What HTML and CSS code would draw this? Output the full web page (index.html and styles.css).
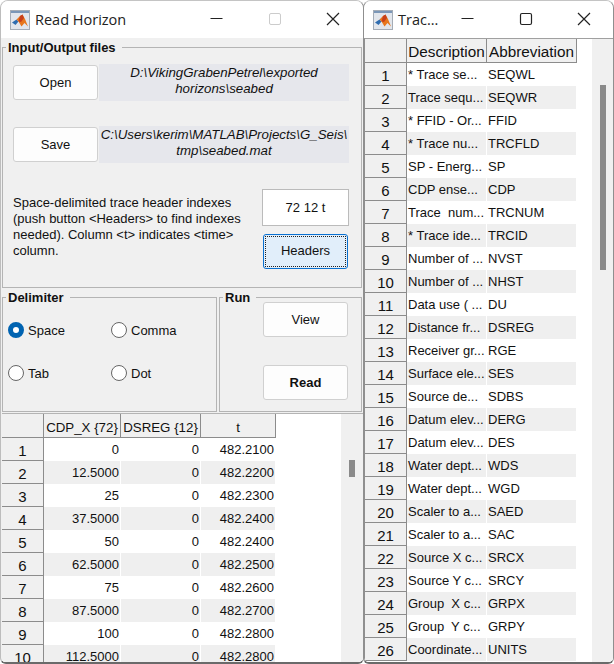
FILE: index.html
```html
<!DOCTYPE html>
<html lang="en">
<head>
    <meta charset="UTF-8">
    <title>Read Horizon</title>
    <link rel="stylesheet" href="styles.css">
</head>
<body>
    <div class="window win-read">
        <div class="titlebar">
            <svg class="app-icon" viewBox="0 0 20 20">
                <rect x="0.5" y="0.5" width="19" height="19" fill="#e2e6ec" stroke="#a4acb6"/>
                <rect x="1" y="1" width="18" height="2" fill="#7b97b8"/>
                <path d="M2 12.5 L6.5 9.5 L8.5 11.5 L5.5 15 Z" fill="#2f6db0"/>
                <path d="M6.5 9.5 L10 6 L12.5 4.5 L15 9 L18 16.5 L14.5 13 L11.5 16.5 L8.5 11.5 Z" fill="#e8761c"/>
                <path d="M10 6 L12.5 4.5 L14 8 L11 12 L8.5 11.5 Z" fill="#c8401a"/>
            </svg>
            <span class="title">Read Horizon</span>
            <div class="win-controls">
                <svg class="ctl" viewBox="0 0 58 37"><path d="M22.5 17.5 H34.5" stroke="#222" fill="none"/></svg>
                <svg class="ctl" viewBox="0 0 58 37"><rect x="23.5" y="12.5" width="11" height="11" rx="1.5" stroke="#ccc" fill="none"/></svg>
                <svg class="ctl" viewBox="0 0 58 37"><path d="M23 12 L35 24 M35 12 L23 24" stroke="#222" fill="none" stroke-width="1.2"/></svg>
            </div>
        </div>
        <div class="panel-body">
            <fieldset class="group group-files">
                <legend>Input/Output files</legend>
                <div class="file-row">
                    <button class="btn btn-file">Open</button>
                    <div class="path">D:\VikingGrabenPetrel\exported<br>horizons\seabed</div>
                </div>
                <div class="file-row file-row-save">
                    <button class="btn btn-file">Save</button>
                    <div class="path">C:\Users\kerim\MATLAB\Projects\G_Seis\<br>tmp\seabed.mat</div>
                </div>
                <div class="index-row">
                    <p class="hint">Space-delimited trace header indexes<br>(push button &lt;Headers&gt; to find indexes<br>needed). Column &lt;t&gt; indicates &lt;time&gt;<br>column.</p>
                    <div class="index-side">
                        <div class="index-input">72 12 t</div>
                        <button class="btn btn-focus"><span>Headers</span></button>
                    </div>
                </div>
            </fieldset>
            <div class="bottom-groups">
                <fieldset class="group group-delim">
                    <legend>Delimiter</legend>
                    <div class="radios">
                        <div class="radio radio-on"><i></i>Space</div>
                        <div class="radio"><i></i>Comma</div>
                        <div class="radio"><i></i>Tab</div>
                        <div class="radio"><i></i>Dot</div>
                    </div>
                </fieldset>
                <fieldset class="group group-run">
                    <legend>Run</legend>
                    <div class="run-btns">
                        <button class="btn btn-run">View</button>
                        <button class="btn btn-run btn-bold">Read</button>
                    </div>
                </fieldset>
            </div>
            <div class="table-wrap table-read">
                <div class="sheet">
                    <div class="tr head"><div class="rh"></div><div class="th c1">CDP_X {72}</div><div class="th c2">DSREG {12}</div><div class="th c3">t</div></div>
                    <div class="tr"><div class="rh">1</div><div class="td c1">0</div><div class="td c2">0</div><div class="td c3">482.2100</div></div>
                    <div class="tr alt"><div class="rh">2</div><div class="td c1">12.5000</div><div class="td c2">0</div><div class="td c3">482.2200</div></div>
                    <div class="tr"><div class="rh">3</div><div class="td c1">25</div><div class="td c2">0</div><div class="td c3">482.2300</div></div>
                    <div class="tr alt"><div class="rh">4</div><div class="td c1">37.5000</div><div class="td c2">0</div><div class="td c3">482.2400</div></div>
                    <div class="tr"><div class="rh">5</div><div class="td c1">50</div><div class="td c2">0</div><div class="td c3">482.2400</div></div>
                    <div class="tr alt"><div class="rh">6</div><div class="td c1">62.5000</div><div class="td c2">0</div><div class="td c3">482.2500</div></div>
                    <div class="tr"><div class="rh">7</div><div class="td c1">75</div><div class="td c2">0</div><div class="td c3">482.2600</div></div>
                    <div class="tr alt"><div class="rh">8</div><div class="td c1">87.5000</div><div class="td c2">0</div><div class="td c3">482.2700</div></div>
                    <div class="tr"><div class="rh">9</div><div class="td c1">100</div><div class="td c2">0</div><div class="td c3">482.2800</div></div>
                    <div class="tr alt"><div class="rh">10</div><div class="td c1">112.5000</div><div class="td c2">0</div><div class="td c3">482.2800</div></div>
                </div>
                <div class="scroll scroll-read"><div class="thumb"></div></div>
            </div>
        </div>
    </div>

    <div class="window win-trace">
        <div class="titlebar">
            <svg class="app-icon" viewBox="0 0 20 20">
                <rect x="0.5" y="0.5" width="19" height="19" fill="#e2e6ec" stroke="#a4acb6"/>
                <rect x="1" y="1" width="18" height="2" fill="#7b97b8"/>
                <path d="M2 12.5 L6.5 9.5 L8.5 11.5 L5.5 15 Z" fill="#2f6db0"/>
                <path d="M6.5 9.5 L10 6 L12.5 4.5 L15 9 L18 16.5 L14.5 13 L11.5 16.5 L8.5 11.5 Z" fill="#e8761c"/>
                <path d="M10 6 L12.5 4.5 L14 8 L11 12 L8.5 11.5 Z" fill="#c8401a"/>
            </svg>
            <span class="title">Trac...</span>
            <div class="win-controls">
                <svg class="ctl" viewBox="0 0 58 37"><path d="M22.5 17.5 H34.5" stroke="#222" fill="none"/></svg>
                <svg class="ctl" viewBox="0 0 58 37"><rect x="23.5" y="12.5" width="11" height="11" rx="1.5" stroke="#222" fill="none" stroke-width="1.2"/></svg>
                <svg class="ctl" viewBox="0 0 58 37"><path d="M23 12 L35 24 M35 12 L23 24" stroke="#222" fill="none" stroke-width="1.2"/></svg>
            </div>
        </div>
        <div class="table-wrap table-trace">
            <div class="sheet">
                <div class="tr head"><div class="rh"></div><div class="th d1">Description</div><div class="th d2">Abbreviation</div></div>
                <div class="tr"><div class="rh">1</div><div class="td d1">* Trace se...</div><div class="td d2">SEQWL</div></div>
                <div class="tr alt"><div class="rh">2</div><div class="td d1">Trace sequ...</div><div class="td d2">SEQWR</div></div>
                <div class="tr"><div class="rh">3</div><div class="td d1">* FFID - Or...</div><div class="td d2">FFID</div></div>
                <div class="tr alt"><div class="rh">4</div><div class="td d1">* Trace nu...</div><div class="td d2">TRCFLD</div></div>
                <div class="tr"><div class="rh">5</div><div class="td d1">SP - Energ...</div><div class="td d2">SP</div></div>
                <div class="tr alt"><div class="rh">6</div><div class="td d1">CDP ense...</div><div class="td d2">CDP</div></div>
                <div class="tr"><div class="rh">7</div><div class="td d1">Trace&nbsp; num...</div><div class="td d2">TRCNUM</div></div>
                <div class="tr alt"><div class="rh">8</div><div class="td d1">* Trace ide...</div><div class="td d2">TRCID</div></div>
                <div class="tr"><div class="rh">9</div><div class="td d1">Number of ...</div><div class="td d2">NVST</div></div>
                <div class="tr alt"><div class="rh">10</div><div class="td d1">Number of ...</div><div class="td d2">NHST</div></div>
                <div class="tr"><div class="rh">11</div><div class="td d1">Data use ( ...</div><div class="td d2">DU</div></div>
                <div class="tr alt"><div class="rh">12</div><div class="td d1">Distance fr...</div><div class="td d2">DSREG</div></div>
                <div class="tr"><div class="rh">13</div><div class="td d1">Receiver gr...</div><div class="td d2">RGE</div></div>
                <div class="tr alt"><div class="rh">14</div><div class="td d1">Surface ele...</div><div class="td d2">SES</div></div>
                <div class="tr"><div class="rh">15</div><div class="td d1">Source de...</div><div class="td d2">SDBS</div></div>
                <div class="tr alt"><div class="rh">16</div><div class="td d1">Datum elev...</div><div class="td d2">DERG</div></div>
                <div class="tr"><div class="rh">17</div><div class="td d1">Datum elev...</div><div class="td d2">DES</div></div>
                <div class="tr alt"><div class="rh">18</div><div class="td d1">Water dept...</div><div class="td d2">WDS</div></div>
                <div class="tr"><div class="rh">19</div><div class="td d1">Water dept...</div><div class="td d2">WGD</div></div>
                <div class="tr alt"><div class="rh">20</div><div class="td d1">Scaler to a...</div><div class="td d2">SAED</div></div>
                <div class="tr"><div class="rh">21</div><div class="td d1">Scaler to a...</div><div class="td d2">SAC</div></div>
                <div class="tr alt"><div class="rh">22</div><div class="td d1">Source X c...</div><div class="td d2">SRCX</div></div>
                <div class="tr"><div class="rh">23</div><div class="td d1">Source Y c...</div><div class="td d2">SRCY</div></div>
                <div class="tr alt"><div class="rh">24</div><div class="td d1">Group&nbsp; X c...</div><div class="td d2">GRPX</div></div>
                <div class="tr"><div class="rh">25</div><div class="td d1">Group&nbsp; Y c...</div><div class="td d2">GRPY</div></div>
                <div class="tr alt"><div class="rh">26</div><div class="td d1">Coordinate...</div><div class="td d2">UNITS</div></div>
            </div>
            <div class="scroll scroll-trace"><div class="thumb"></div></div>
        </div>
    </div>
</body>
</html>
```

FILE: styles.css
```css
html, body { margin: 0; height: 100%; }
body { position: relative; width: 614px; height: 664px; overflow: hidden; background: #fff; font-family: "Liberation Sans", Arial, sans-serif; font-size: 13px; color: #111; }

.window { position: absolute; top: 0; height: 664px; background: #f0f0f0; border: 1px solid #8f8f8f; border-top-color: #c4c4c4; border-bottom: 2px solid #6a6a6a; border-radius: 8px 8px 6px 6px; overflow: hidden; box-sizing: border-box; display: flex; flex-direction: column; }
.win-read { left: 0; width: 364px; border-left-color: #bdbdbd; }
.win-trace { left: 363px; width: 251px; }

.titlebar { height: 37px; flex: none; background: #fff; display: flex; align-items: center; padding-left: 9px; font-family: "Open Sans", sans-serif; font-size: 14.5px; color: #222; }
.app-icon { width: 20px; height: 20px; flex: none; margin-right: 5px; }
.title { flex: 1; white-space: nowrap; }
.win-controls { display: flex; flex: none; }
.win-read .win-controls { margin-right: 1px; }
.ctl { width: 58px; height: 37px; display: block; }

.panel-body { flex: 1; min-height: 0; display: flex; flex-direction: column; }
.group { margin: 0; padding: 0; border: 1px solid #b4b4b4; box-sizing: border-box; min-width: 0; }
.group legend { font-weight: bold; font-size: 13px; padding: 0 6px 0 2px; margin-left: 3px; line-height: 15px; color: #111; }
.group-files { height: 248px; width: 360px; flex: none; margin: 2px 0 0 1px; padding: 9px 12px 0 10px; }
.group-files legend { margin-left: -7px; }

.btn { background: #fdfdfd; border: 1px solid #d0d0d0; border-radius: 3px; font: inherit; color: #111; padding: 0; }
.file-row { display: flex; height: 37px; align-items: center; gap: 1px; }
.file-row-save { margin-top: 25px; }
.btn-file { width: 85px; height: 35px; }
.path { width: 250px; height: 37px; background: #e6e7ec; text-align: center; font-style: italic; font-size: 13.3px; line-height: 16px; box-sizing: border-box; padding-top: 1px; white-space: nowrap; }

.index-row { display: flex; justify-content: space-between; margin-top: 26px; }
.hint { margin: 6px 0 0; line-height: 16px; white-space: nowrap; }
.index-side { width: 87px; display: flex; flex-direction: column; align-items: center; gap: 8px; }
.index-input { width: 87px; height: 37px; box-sizing: border-box; background: #fff; border: 1px solid #bbb; text-align: center; line-height: 35px; }
.btn-focus { width: 85px; height: 35px; background: #e1eefa; border: 1px solid #0a70d0; border-radius: 3px; padding: 1px; }
.btn-focus span { display: block; height: 100%; line-height: 27px; border: 1px dotted #222; box-sizing: border-box; }

.bottom-groups { display: flex; height: 122px; margin: 2px 0 0 1px; gap: 2px; flex: none; }
.group-delim { width: 215px; }
.group-run { width: 143px; }
.radios { display: grid; grid-template-columns: 103px 100px; grid-auto-rows: 43px; padding: 17px 0 0 5px; }
.radio { display: flex; align-items: center; gap: 4px; height: 16px; }
.radio i { width: 14px; height: 14px; border: 1px solid #666; border-radius: 50%; background: #fff; flex: none; }
.radio-on i { background: #fff; border: 5px solid #0063b1; width: 6px; height: 6px; }
.run-btns { display: flex; flex-direction: column; align-items: flex-end; gap: 28px; margin-top: -3px; padding-right: 13px; }
.btn-run { width: 85px; height: 35px; }
.btn-bold { font-weight: bold; }

.table-wrap { flex: 1; min-height: 0; display: flex; background: #fff; overflow: hidden; }
.table-read { border-top: 1px solid #b4b4b4; margin-top: 1px; margin-left: 1px; }
.table-trace { border-top: 1px solid #a0a0a0; border-left: 1px solid #8f8f8f; }
.sheet { flex: 1; min-width: 0; }
.tr { display: flex; height: 23px; background: #fff; }
.tr.alt .td { background: #efefef; }
.tr.head { height: 24px; }
.rh, .th { background: #f0f0f0; border-right: 1px solid #8c8c8c; border-bottom: 1px solid #8c8c8c; box-sizing: border-box; text-align: center; flex: none; white-space: nowrap; overflow: hidden; }
.rh { width: 42px; font-size: 15px; line-height: 26px; }
.th { line-height: 28px; font-size: 13.3px; }
.td { box-sizing: border-box; flex: none; white-space: nowrap; overflow: hidden; line-height: 23px; border-right: 1px solid #fff; padding: 0 1px; }

.c1 { width: 77px; text-align: right; }
.c2 { width: 80px; text-align: right; }
.c3 { width: 75px; text-align: right; }
.d1 { width: 80px; text-align: left; }
.d2 { width: 90px; text-align: left; }
.th.c1, .th.c2, .th.c3, .th.d1, .th.d2 { text-align: center; }
.th.d1, .th.d2 { font-size: 15.3px; line-height: 26px; }

.scroll { width: 22px; flex: none; background: #f0f0f0; position: relative; }
.thumb { position: absolute; left: 8px; width: 6px; background: #8a8a8a; }
.scroll-read .thumb { top: 46px; height: 17px; }
.scroll-trace { width: 21px; }
.scroll-trace .thumb { top: 46px; height: 185px; }
```
